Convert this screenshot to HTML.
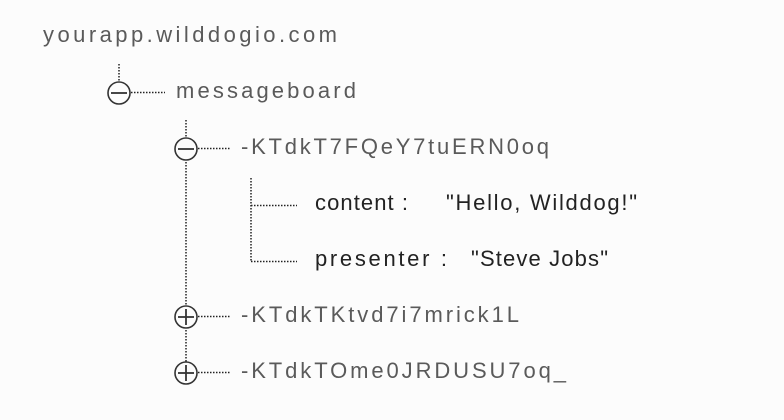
<!DOCTYPE html>
<html><head><meta charset="utf-8"><style>
html,body{margin:0;padding:0;background:#fcfcfc;width:784px;height:420px;overflow:hidden}
svg{display:block}
text{font-family:"Liberation Sans",sans-serif;font-size:22px;fill:#5a5a5a}
.d{fill:#222}
</style></head><body>
<svg width="784" height="420" viewBox="0 0 784 420">
<g stroke="#222" stroke-width="1.5" stroke-dasharray="1.5 1.5" fill="none">
<line x1="119" y1="64" x2="119" y2="81"/>
<line x1="131" y1="92.5" x2="165" y2="92.5"/>
<line x1="186" y1="120" x2="186" y2="370"/>
<line x1="198" y1="148.5" x2="231" y2="148.5"/>
<line x1="251" y1="178" x2="251" y2="262"/>
<line x1="251" y1="205.5" x2="297" y2="205.5"/>
<line x1="251" y1="261.5" x2="297" y2="261.5"/>
<line x1="198" y1="316.5" x2="231" y2="316.5"/>
<line x1="198" y1="372.5" x2="231" y2="372.5"/>
</g>
<g stroke="#333" stroke-width="1.6" fill="#fcfcfc">
<circle cx="119" cy="93" r="11"/>
<circle cx="186" cy="149" r="11"/>
<circle cx="186" cy="317" r="11"/>
<circle cx="186" cy="373" r="11"/>
</g>
<g stroke="#333" stroke-width="1.8">
<line x1="111" y1="93" x2="127" y2="93"/>
<line x1="178" y1="149" x2="194" y2="149"/>
<line x1="178" y1="317" x2="194" y2="317"/>
<line x1="186" y1="309" x2="186" y2="325"/>
<line x1="178" y1="373" x2="194" y2="373"/>
<line x1="186" y1="365" x2="186" y2="381"/>
</g>
<text x="43" y="42" textLength="294">yourapp.wilddogio.com</text>
<text x="176" y="98" textLength="180">messageboard</text>
<text x="241" y="154" textLength="308">-KTdkT7FQeY7tuERN0oq</text>
<text class="d" x="315" y="210" textLength="93">content :</text>
<text class="d" x="446" y="210" textLength="191">"Hello, Wilddog!"</text>
<text class="d" x="315" y="266" textLength="132">presenter :</text>
<text class="d" x="471" y="266" textLength="137">"Steve Jobs"</text>
<text x="241" y="322" textLength="278">-KTdkTKtvd7i7mrick1L</text>
<text x="241" y="378" textLength="325">-KTdkTOme0JRDUSU7oq_</text>
</svg>
</body></html>
